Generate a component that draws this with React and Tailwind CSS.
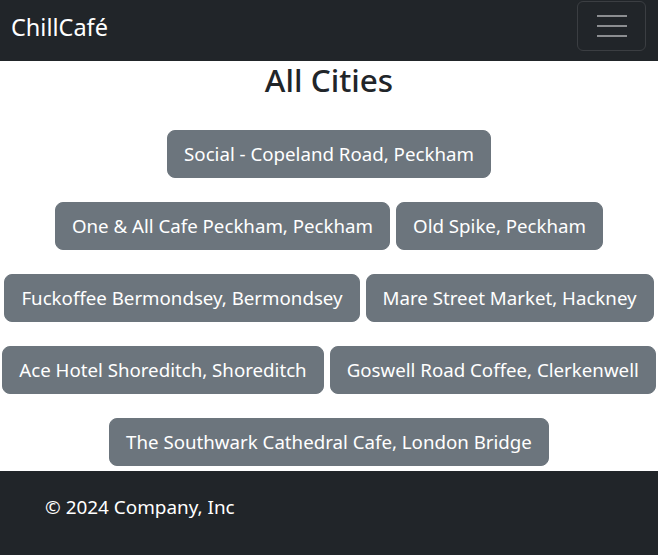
import React from "react";

const places = [
  "Social - Copeland Road, Peckham",
  "One & All Cafe Peckham, Peckham",
  "Old Spike, Peckham",
  "Fuckoffee Bermondsey, Bermondsey",
  "Mare Street Market, Hackney",
  "Ace Hotel Shoreditch, Shoreditch",
  "Goswell Road Coffee, Clerkenwell",
  "The Southwark Cathedral Cafe, London Bridge",
];

export default function App() {
  return (
    <div className="min-h-[555px] bg-white text-[#212529] font-['Noto_Sans',sans-serif]">
      <nav className="h-[61px] bg-[#212529] flex items-start justify-between pl-[11px] pr-[12px] pt-[1px]">
        <span className="text-white text-[23.5px] leading-[30px] mt-[11px]">ChillCafé</span>
        <button className="w-[69px] h-[50px] border border-[#3b3e42] rounded-[6px] flex flex-col items-center justify-center gap-[8px]">
          <span className="block w-[30px] h-[2px] bg-[#8b8d90]"></span>
          <span className="block w-[30px] h-[2px] bg-[#8b8d90]"></span>
          <span className="block w-[30px] h-[2px] bg-[#8b8d90]"></span>
        </button>
      </nav>
      <main className="pb-[5px]">
        <h1 className="text-center text-[31.5px] leading-[38px] font-medium">All Cities</h1>
        <div className="flex flex-wrap justify-center gap-x-[6px] gap-y-[24px] pt-[31px]">
          {places.map((p) => (
            <button
              key={p}
              className="bg-[#6c757d] text-white text-[18.7px] leading-[30px] px-[16px] py-[8px] border border-[#6c757d] rounded-[8px] whitespace-nowrap"
            >
              {p}
            </button>
          ))}
        </div>
      </main>
      <footer className="bg-[#212529] h-[85px] pl-[45px] pt-[21px] text-white text-[18.9px] leading-[30px]">
        © 2024 Company, Inc
      </footer>
    </div>
  );
}
